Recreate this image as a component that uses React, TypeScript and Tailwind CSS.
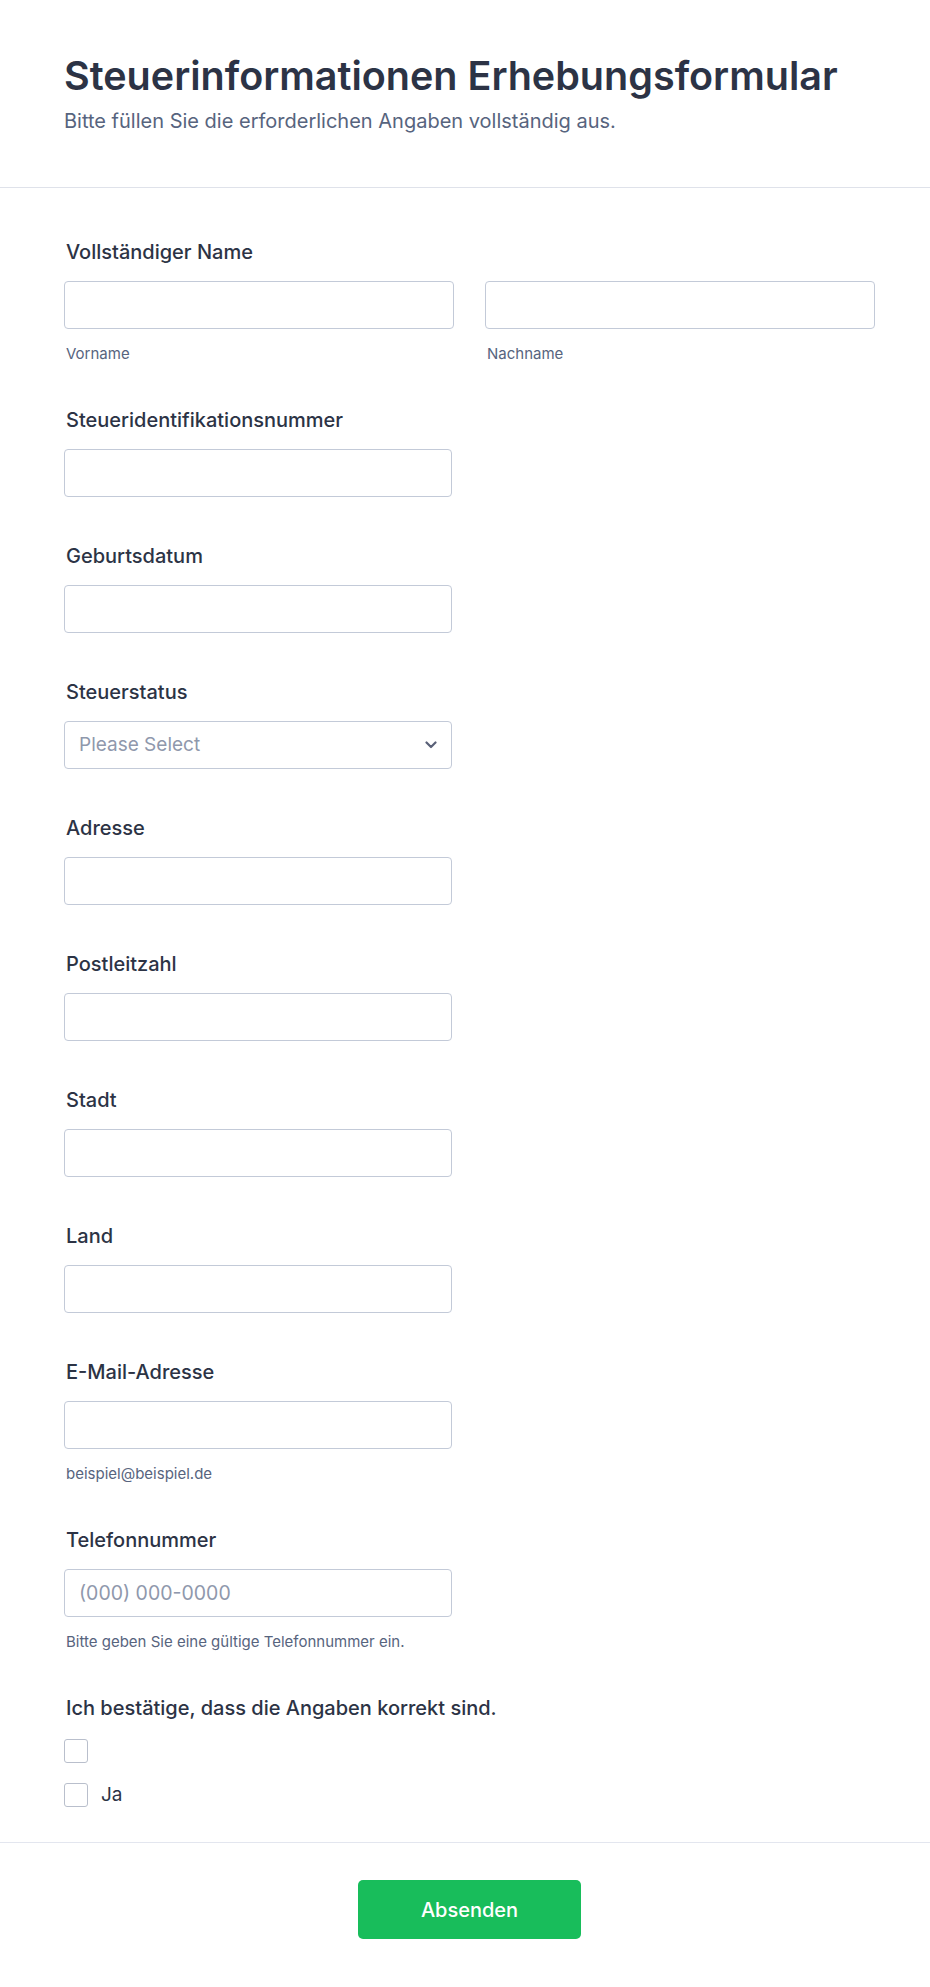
import React from 'react'

const font = { fontFamily: 'Inter, "Noto Sans", sans-serif' }

function Label({ children }: { children: React.ReactNode }) {
  return <label className="block pl-[2px] text-[20px] leading-[24px] font-medium text-[#2c3345]">{children}</label>
}

function TextInput({ placeholder, className = '' }: { placeholder?: string; className?: string }) {
  return (
    <input
      type="text"
      placeholder={placeholder}
      className={`block h-[48px] px-[14px] border border-[#c3cad8] rounded-[4px] bg-white text-[19.5px] text-[#2c3345] placeholder:text-[#8f98ac] outline-none ${className}`}
    />
  )
}

function SubLabel({ children }: { children: React.ReactNode }) {
  return <p className="mt-[17px] pl-[2px] text-[15px] leading-[15px] text-[#57647e]">{children}</p>
}

function Field({ label, placeholder, hint }: { label: string; placeholder?: string; hint?: string }) {
  return (
    <div>
      <Label>{label}</Label>
      <TextInput placeholder={placeholder} className="mt-[17px] w-[388px]" />
      {hint && <SubLabel>{hint}</SubLabel>}
    </div>
  )
}

export default function App() {
  return (
    <div className="min-h-[1987px] bg-white" style={font}>
      {/* 헤더 */}
      <div className="px-[64px] pt-[52px] pb-[53px] border-b border-[#dfe2ea]">
        <h1 className="text-[39.5px] leading-[48px] font-semibold text-[#2c3345]">
          Steuerinformationen Erhebungsformular
        </h1>
        <p className="mt-[8px] text-[20px] leading-[26px] text-[#57647e]">
          Bitte füllen Sie die erforderlichen Angaben vollständig aus.
        </p>
      </div>

      {/* 본문 */}
      <div className="pl-[64px] pt-[52px] pb-[35px] flex flex-col gap-[47px] border-b border-[#e3e6ef]">
        <div>
          <Label>Vollständiger Name</Label>
          <div className="mt-[17px] w-[811px] grid grid-cols-2 gap-[31px]">
            <div>
              <TextInput className="w-full" />
              <SubLabel>Vorname</SubLabel>
            </div>
            <div>
              <TextInput className="w-full" />
              <SubLabel>Nachname</SubLabel>
            </div>
          </div>
        </div>

        <Field label="Steueridentifikationsnummer" />
        <Field label="Geburtsdatum" />

        <div>
          <Label>Steuerstatus</Label>
          <div className="mt-[17px] w-[388px] h-[48px] px-[14px] border border-[#c3cad8] rounded-[4px] flex items-center justify-between">
            <span className="text-[19px] text-[#8f98ac]">Please Select</span>
            <svg width="12" height="8" viewBox="0 0 12 8" fill="none">
              <path d="M1.5 1.5L6 6L10.5 1.5" stroke="#5a6178" strokeWidth="2.2" strokeLinecap="round" strokeLinejoin="round" />
            </svg>
          </div>
        </div>

        <Field label="Adresse" />
        <Field label="Postleitzahl" />
        <Field label="Stadt" />
        <Field label="Land" />
        <Field label="E-Mail-Adresse" hint="beispiel@beispiel.de" />
        <Field label="Telefonnummer" placeholder="(000) 000-0000" hint="Bitte geben Sie eine gültige Telefonnummer ein." />

        <div>
          <Label>Ich bestätige, dass die Angaben korrekt sind.</Label>
          <div className="mt-[19px] flex flex-col gap-[20px]">
            <div className="w-[24px] h-[24px] border border-[#b9bfcc] rounded-[3px]" />
            <div className="flex items-center gap-[13px]">
              <div className="w-[24px] h-[24px] border border-[#b9bfcc] rounded-[3px]" />
              <span className="text-[19px] leading-[24px] text-[#2c3345]">Ja</span>
            </div>
          </div>
        </div>
      </div>

      {/* 푸터 */}
      <div className="pl-[64px] pr-[55px] pt-[37px] pb-[50px] flex justify-center">
        <button className="w-[223px] h-[59px] bg-[#18bd5b] rounded-[5px] text-white text-[20px] font-medium">
          Absenden
        </button>
      </div>
    </div>
  )
}
